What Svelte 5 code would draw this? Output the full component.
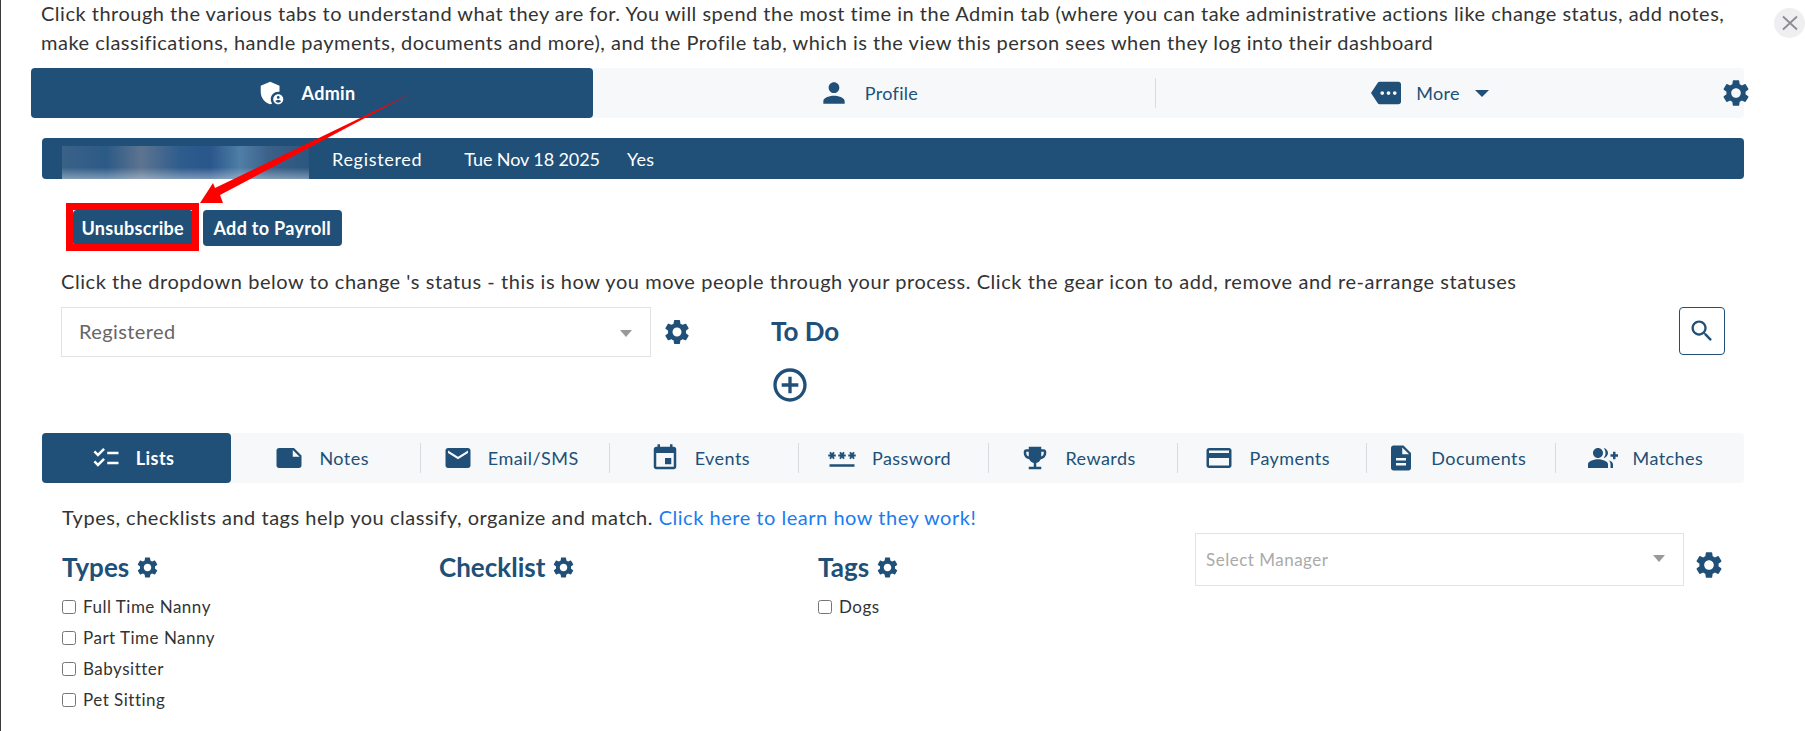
<script lang="ts">
	const gear =
		'M19.14 12.94c.04-.3.06-.61.06-.94 0-.32-.02-.64-.07-.94l2.03-1.58c.18-.14.23-.41.12-.61l-1.92-3.32c-.12-.22-.37-.29-.59-.22l-2.39.96c-.5-.38-1.03-.7-1.62-.94l-.36-2.54c-.04-.24-.24-.41-.48-.41h-3.84c-.24 0-.43.17-.47.41l-.36 2.54c-.59.24-1.13.57-1.62.94l-2.39-.96c-.22-.08-.47 0-.59.22L2.74 8.87c-.12.21-.08.47.12.61l2.03 1.58c-.05.3-.09.63-.09.94s.02.64.07.94l-2.03 1.58c-.18.14-.23.41-.12.61l1.92 3.32c.12.22.37.29.59.22l2.39-.96c.5.38 1.03.7 1.62.94l.36 2.54c.05.24.24.41.48.41h3.84c.24 0 .44-.17.47-.41l.36-2.54c.59-.24 1.13-.56 1.62-.94l2.39.96c.22.08.47 0 .59-.22l1.92-3.32c.12-.22.07-.47-.12-.61l-2.01-1.58zM12 15.6c-1.98 0-3.6-1.62-3.6-3.6s1.62-3.6 3.6-3.6 3.6 1.62 3.6 3.6-1.62 3.6-3.6 3.6z';
	const shield =
		'M17 11c.34 0 .67.04 1 .09V6.27L10.5 3 3 6.27v4.91c0 4.54 3.2 8.79 7.5 9.82.55-.13 1.08-.32 1.6-.55-.69-.98-1.1-2.17-1.1-3.45 0-3.31 2.69-6 6-6zM17 13c-2.21 0-4 1.79-4 4s1.79 4 4 4 4-1.79 4-4-1.79-4-4-4zm0 1.38c.62 0 1.12.51 1.12 1.12s-.51 1.12-1.12 1.12-1.12-.51-1.12-1.12.5-1.12 1.12-1.12zm0 5.37c-.93 0-1.74-.46-2.24-1.17.05-.72 1.51-1.08 2.24-1.08s2.19.36 2.24 1.08c-.5.71-1.31 1.17-2.24 1.17z';
	const person =
		'M12 12c2.21 0 4-1.79 4-4s-1.79-4-4-4-4 1.79-4 4 1.79 4 4 4zm0 2c-2.67 0-8 1.34-8 4v2h16v-2c0-2.66-5.33-4-8-4z';
	const more =
		'M22 3H7c-.69 0-1.23.35-1.59.88L0 12l5.41 8.11c.36.53.9.89 1.59.89h15c1.1 0 2-.9 2-2V5c0-1.1-.9-2-2-2zM9 13.5c-.83 0-1.5-.67-1.5-1.5s.67-1.5 1.5-1.5 1.5.67 1.5 1.5-.67 1.5-1.5 1.5zm5 0c-.83 0-1.5-.67-1.5-1.5s.67-1.5 1.5-1.5 1.5.67 1.5 1.5-.67 1.5-1.5 1.5zm5 0c-.83 0-1.5-.67-1.5-1.5s.67-1.5 1.5-1.5 1.5.67 1.5 1.5-.67 1.5-1.5 1.5z';
	const search =
		'M15.5 14h-.79l-.28-.27C15.41 12.59 16 11.11 16 9.5 16 5.91 13.09 3 9.5 3S3 5.91 3 9.5 5.91 16 9.5 16c1.61 0 3.09-.59 4.23-1.57l.27.28v.79l5 4.99L20.49 19l-4.99-5zm-6 0C7.01 14 5 11.99 5 9.5S7.01 5 9.5 5 14 7.01 14 9.5 11.99 14 9.5 14z';
	const addCircle =
		'M13 7h-2v4H7v2h4v4h2v-4h4v-2h-4V7zm-1-5C6.48 2 2 6.48 2 12s4.48 10 10 10 10-4.48 10-10S17.52 2 12 2zm0 18c-4.41 0-8-3.59-8-8s3.59-8 8-8 8 3.59 8 8-3.59 8-8 8z';

	const subTabs = [
		{
			label: 'Lists',
			d: 'M22 7h-9v2h9V7zm0 8h-9v2h9v-2zM5.54 11L2 7.46l1.41-1.41 2.12 2.12 4.24-4.24 1.41 1.41L5.54 11zm0 8L2 15.46l1.41-1.41 2.12 2.12 4.24-4.24 1.41 1.41L5.54 19z'
		},
		{
			label: 'Notes',
			d: 'M22 10l-6-6H4c-1.1 0-2 .9-2 2v12.01c0 1.1.9 1.99 2 1.99l16-.01c1.1 0 2-.89 2-1.99v-8zm-7-4.5l5.5 5.5H15V5.5z'
		},
		{
			label: 'Email/SMS',
			d: 'M20 4H4c-1.1 0-1.99.9-1.99 2L2 18c0 1.1.9 2 2 2h16c1.1 0 2-.9 2-2V6c0-1.1-.9-2-2-2zm0 4l-8 5-8-5V6l8 5 8-5v2z'
		},
		{
			label: 'Events',
			d: 'M17 12h-5v5h5v-5zM16 1v2H8V1H6v2H5c-1.11 0-1.99.9-1.99 2L3 19c0 1.1.89 2 2 2h14c1.1 0 2-.9 2-2V5c0-1.1-.9-2-2-2h-1V1h-2zm3 18H5V8h14v11z'
		},
		{
			label: 'Password',
			d: 'M2 17h20v2H2v-2zm1.15-4.05L4 11.47l.85 1.48 1.3-.75-.85-1.48H7v-1.5H5.3l.85-1.47L4.85 7 4 8.47 3.15 7l-1.3.75.85 1.47H1v1.5h1.7l-.85 1.48 1.3.75zm6.7-.75l1.3.75.85-1.48.85 1.48 1.3-.75-.85-1.48H15v-1.5h-1.7l.85-1.47-1.3-.75L12 8.47 11.15 7l-1.3.75.85 1.47H9v1.5h1.7l-.85 1.48zM23 9.22h-1.7l.85-1.47-1.3-.75L20 8.47 19.15 7l-1.3.75.85 1.47H17v1.5h1.7l-.85 1.48 1.3.75.85-1.48.85 1.48 1.3-.75-.85-1.48H23v-1.5z'
		},
		{
			label: 'Rewards',
			d: 'M19 5h-2V3H7v2H5c-1.1 0-2 .9-2 2v1c0 2.55 1.92 4.63 4.39 4.94.63 1.5 1.98 2.63 3.61 2.96V19H7v2h10v-2h-4v-3.1c1.63-.33 2.98-1.46 3.61-2.96C19.08 12.63 21 10.55 21 8V7c0-1.1-.9-2-2-2zM5 8V7h2v3.82C5.84 10.4 5 9.3 5 8zm14 0c0 1.3-.84 2.4-2 2.82V7h2v1z'
		},
		{
			label: 'Payments',
			d: 'M20 4H4c-1.11 0-1.99.89-1.99 2L2 18c0 1.11.89 2 2 2h16c1.11 0 2-.89 2-2V6c0-1.11-.89-2-2-2zm0 14H4v-6h16v6zm0-10H4V6h16v2z'
		},
		{
			label: 'Documents',
			d: 'M14 2H6c-1.1 0-1.99.9-1.99 2L4 20c0 1.1.89 2 1.99 2H18c1.1 0 2-.9 2-2V8l-6-6zm2 16H8v-2h8v2zm0-4H8v-2h8v2zm-3-5V3.5L18.5 9H13z'
		},
		{
			label: 'Matches',
			d: 'M22 9V7h-2v2h-2v2h2v2h2v-2h2V9h-2zM8 12c2.21 0 4-1.79 4-4s-1.79-4-4-4-4 1.79-4 4 1.79 4 4 4zM8 13c-2.67 0-8 1.34-8 4v3h16v-3c0-2.66-5.33-4-8-4zM12.51 4.05C13.43 5.11 14 6.49 14 8s-.57 2.89-1.49 3.95C14.47 11.7 16 10.04 16 8s-1.53-3.7-3.49-3.95zM16.53 13.83C17.42 14.66 18 15.7 18 17v3h2v-3c0-1.45-1.59-2.51-3.47-3.17z'
		}
	];

	const columns = [
		{ title: 'Types', items: ['Full Time Nanny', 'Part Time Nanny', 'Babysitter', 'Pet Sitting'] },
		{ title: 'Checklist', items: [] as string[] },
		{ title: 'Tags', items: ['Dogs'] }
	];
</script>

{#snippet icon(d: string, size: number)}
	<svg class="icon" width={size} height={size} viewBox="0 0 24 24" aria-hidden="true"><path {d} /></svg>
{/snippet}

<div class="page">
	<p class="intro">
		Click through the various tabs to understand what they are for. You will spend the most time in the Admin tab (where you can take administrative actions like change status, add notes, make classifications, handle payments, documents and more), and the Profile tab, which is the view this person sees when they log into their dashboard
	</p>

	<div class="main-tabs">
		<div class="main-tab active">{@render icon(shield, 30)}<span>Admin</span></div>
		<div class="main-tab">{@render icon(person, 32)}<span>Profile</span></div>
		<div class="main-tab split">
			{@render icon(more, 30)}<span>More</span><i class="caret"></i>
		</div>
		<div class="main-gear">{@render icon(gear, 32)}</div>
	</div>

	<div class="summary">
		<div class="blurred"></div>
		<span class="s-status">Registered</span>
		<span class="s-date">Tue Nov 18 2025</span>
		<span>Yes</span>
	</div>

	<div class="actions">
		<button class="btn">Unsubscribe</button>
		<button class="btn wide">Add to Payroll</button>
	</div>

	<p class="status-help">
		Click the dropdown below to change 's status - this is how you move people through your process. Click the gear icon to add, remove and re-arrange statuses
	</p>

	<div class="status-row">
		<div class="select status-select"><span>Registered</span><i class="select-arrow"></i></div>
		<div class="status-gear">{@render icon(gear, 30)}</div>
		<div class="todo">
			<h2>To Do</h2>
			{@render icon(addCircle, 40)}
		</div>
		<button class="search">{@render icon(search, 28)}</button>
	</div>

	<div class="sub-tabs">
		{#each subTabs as tab, i}
			<div class="sub-tab" class:active={i === 0} class:sep={i > 1}>
				{@render icon(tab.d, 30)}<span>{tab.label}</span>
			</div>
		{/each}
	</div>

	<div class="lists">
		<p class="lists-help">
			Types, checklists and tags help you classify, organize and match. <a href="#learn">Click here to learn how they work!</a>
		</p>
		<div class="lists-grid">
			{#each columns as col}
				<div class="col">
					<h3>{col.title} {@render icon(gear, 25)}</h3>
					{#each col.items as item}
						<label class="check"><input type="checkbox" /><span>{item}</span></label>
					{/each}
				</div>
			{/each}
			<div class="manager">
				<div class="select manager-select"><span>Select Manager</span><i class="select-arrow"></i></div>
				{@render icon(gear, 32)}
			</div>
		</div>
	</div>

	<button class="close" aria-label="Close">
		<svg width="18" height="16" viewBox="0 0 18 16"><path d="M2 1.5l14 13M16 1.5L2 14.5" /></svg>
	</button>

	<svg class="annotation" width="1805" height="731" viewBox="0 0 1805 731" aria-hidden="true">
		<rect x="69.5" y="206.5" width="126" height="41" />
		<polygon points="200,203 213,183 215,188 412,93 220,195 223,203" />
	</svg>
</div>

<style>
	:global(body) {
		margin: 0;
		background: #fff;
	}

	.page {
		position: relative;
		box-sizing: border-box;
		height: 731px;
		overflow: hidden;
		border-left: 1px solid #3a3a3a;
		font-family: Lato, 'Open Sans', sans-serif;
		font-size: 18px;
		color: #333;
	}

	.icon {
		flex: none;
		fill: #205078;
	}

	.intro {
		margin: -1px 0 0 40px;
		width: 1725px;
		font-size: 20px;
		line-height: 29px;
		letter-spacing: 0.5px;
	}

	.main-tabs {
		display: flex;
		align-items: center;
		box-sizing: border-box;
		width: 1713px;
		height: 50px;
		margin: 11px 0 0 30px;
		padding-right: 27px;
		background: #f6f8fa;
		border-radius: 4px;
	}

	.main-tab {
		position: relative;
		flex: 1;
		display: flex;
		align-items: center;
		justify-content: center;
		gap: 15px;
		box-sizing: border-box;
		height: 50px;
		padding-right: 12px;
		color: #205078;
		letter-spacing: 0.3px;
	}

	.main-tab.active {
		background: #205078;
		color: #fff;
		font-weight: 700;
		border-radius: 4px;
	}

	.main-tab.active .icon {
		fill: #fff;
	}

	.main-tab.split::before {
		content: '';
		position: absolute;
		left: 0;
		top: 10px;
		bottom: 10px;
		width: 1px;
		background: #d8dce0;
	}

	.caret {
		width: 0;
		height: 0;
		border: 7px solid transparent;
		border-top-color: #205078;
		border-bottom-width: 0;
	}

	.main-gear {
		display: flex;
		margin-left: 3px;
		margin-right: -35px;
	}

	.summary {
		display: flex;
		align-items: center;
		box-sizing: border-box;
		width: 1702px;
		height: 41px;
		margin: 20px 0 0 41px;
		padding-left: 20px;
		background: #205078;
		border-radius: 4px;
		color: #fff;
		letter-spacing: 0.3px;
	}

	.blurred {
		align-self: flex-end;
		width: 247px;
		height: 33px;
		margin-right: 23px;
		background:
			linear-gradient(180deg, rgba(255, 255, 255, 0) 65%, rgba(220, 230, 240, 0.45) 100%),
			linear-gradient(90deg, #3a6288 0%, #2c5a86 18%, #5d7490 32%, #2e5c8c 48%, #2a568c 60%, #4f7ea6 72%, #3c6088 84%, #2b5680 100%);
	}

	.s-status {
		margin-right: 42px;
		letter-spacing: 0.7px;
	}

	.s-date {
		margin-right: 27px;
		letter-spacing: -0.1px;
	}

	.actions {
		display: flex;
		gap: 10px;
		margin: 31px 0 0 72px;
	}

	.btn {
		height: 36px;
		padding: 0 8.5px;
		border: 0;
		border-radius: 4px;
		background: #205078;
		color: #fff;
		font: 700 18px Lato, 'Open Sans', sans-serif;
		letter-spacing: 0.3px;
	}

	.btn.wide {
		padding: 0 11px;
	}

	.status-help {
		height: 29px;
		margin: 21px 0 0 60px;
		font-size: 20px;
		line-height: 29px;
		letter-spacing: 0.55px;
	}

	.status-row {
		display: flex;
		align-items: flex-start;
		margin: 11px 0 0 60px;
	}

	.select {
		position: relative;
		box-sizing: border-box;
		display: flex;
		align-items: center;
		background: #fff;
		border: 1px solid #e3e3e3;
	}

	.select-arrow {
		position: absolute;
		width: 0;
		height: 0;
		border: 6.5px solid transparent;
		border-top: 7px solid #999;
		border-bottom-width: 0;
	}

	.status-select {
		width: 590px;
		height: 50px;
		padding: 0 0 3px 17px;
		color: #666;
		font-size: 20px;
		letter-spacing: 0.4px;
	}

	.status-select .select-arrow {
		right: 18px;
		top: 22px;
	}

	.status-gear {
		display: flex;
		margin: 10px 0 0 11px;
	}

	.todo {
		margin-left: 79px;
		width: 200px;
	}

	.todo h2 {
		margin: 0;
		height: 50px;
		line-height: 48px;
		font-size: 26px;
		font-weight: 700;
		color: #205078;
	}

	.todo .icon {
		display: block;
		margin: 8px 0 0 -1px;
	}

	.search {
		display: flex;
		align-items: center;
		justify-content: center;
		box-sizing: border-box;
		width: 46px;
		height: 48px;
		margin-left: auto;
		margin-right: 80px;
		padding: 0;
		background: #fff;
		border: 1px solid #205078;
		border-radius: 4px;
	}

	.sub-tabs {
		display: grid;
		grid-template-columns: repeat(9, 1fr);
		width: 1702px;
		height: 50px;
		margin: 28px 0 0 41px;
		background: #f6f8fa;
		border-radius: 4px;
	}

	.sub-tab {
		position: relative;
		display: flex;
		align-items: center;
		justify-content: center;
		gap: 15px;
		padding-right: 8px;
		color: #205078;
		font-size: 18px;
		letter-spacing: 0.45px;
	}

	.sub-tab.sep::before {
		content: '';
		position: absolute;
		left: 0;
		top: 10px;
		bottom: 10px;
		width: 1px;
		background: #d8dce0;
	}

	.sub-tab.active {
		background: #205078;
		color: #fff;
		font-weight: 700;
		border-radius: 4px;
	}

	.sub-tab.active .icon {
		fill: #fff;
	}

	.lists {
		margin: 21px 0 0 61px;
	}

	.lists-help {
		margin: 0;
		height: 29px;
		font-size: 20px;
		line-height: 27px;
		letter-spacing: 0.52px;
	}

	.lists-help a {
		color: #1a7cf0;
		text-decoration: none;
	}

	.lists-grid {
		display: grid;
		grid-template-columns: 377px 379px 377px 1fr;
	}

	.col h3 {
		display: flex;
		align-items: center;
		gap: 6px;
		margin: 19px 0 10px;
		height: 29px;
		font-size: 26px;
		font-weight: 700;
		color: #205078;
	}

	.col h3 .icon {
		margin-top: 2px;
	}

	.check {
		display: flex;
		align-items: center;
		height: 31px;
		font-size: 17px;
		letter-spacing: 0.5px;
	}

	.check input {
		width: 14px;
		height: 14px;
		margin: 0 7px 0 0;
	}

	.manager {
		display: flex;
		align-items: flex-start;
		gap: 9px;
	}

	.manager .icon {
		margin-top: 16px;
	}

	.manager-select {
		width: 489px;
		height: 53px;
		padding-left: 10px;
		color: #aaa;
		font-size: 17px;
		letter-spacing: 0.5px;
	}

	.manager-select .select-arrow {
		right: 18px;
		top: 21px;
	}

	.close {
		position: absolute;
		right: 0;
		top: 8px;
		width: 31px;
		height: 30px;
		padding: 0;
		border: 0;
		border-radius: 50%;
		background: #efeff1;
	}

	.close svg {
		display: block;
		margin: auto;
	}

	.close path {
		fill: none;
		stroke: #8c8c92;
		stroke-width: 1.8;
	}

	.annotation {
		position: absolute;
		left: -1px;
		top: 0;
		pointer-events: none;
	}

	.annotation rect {
		fill: none;
		stroke: #fe0000;
		stroke-width: 7;
	}

	.annotation polygon {
		fill: #fe0000;
	}
</style>
